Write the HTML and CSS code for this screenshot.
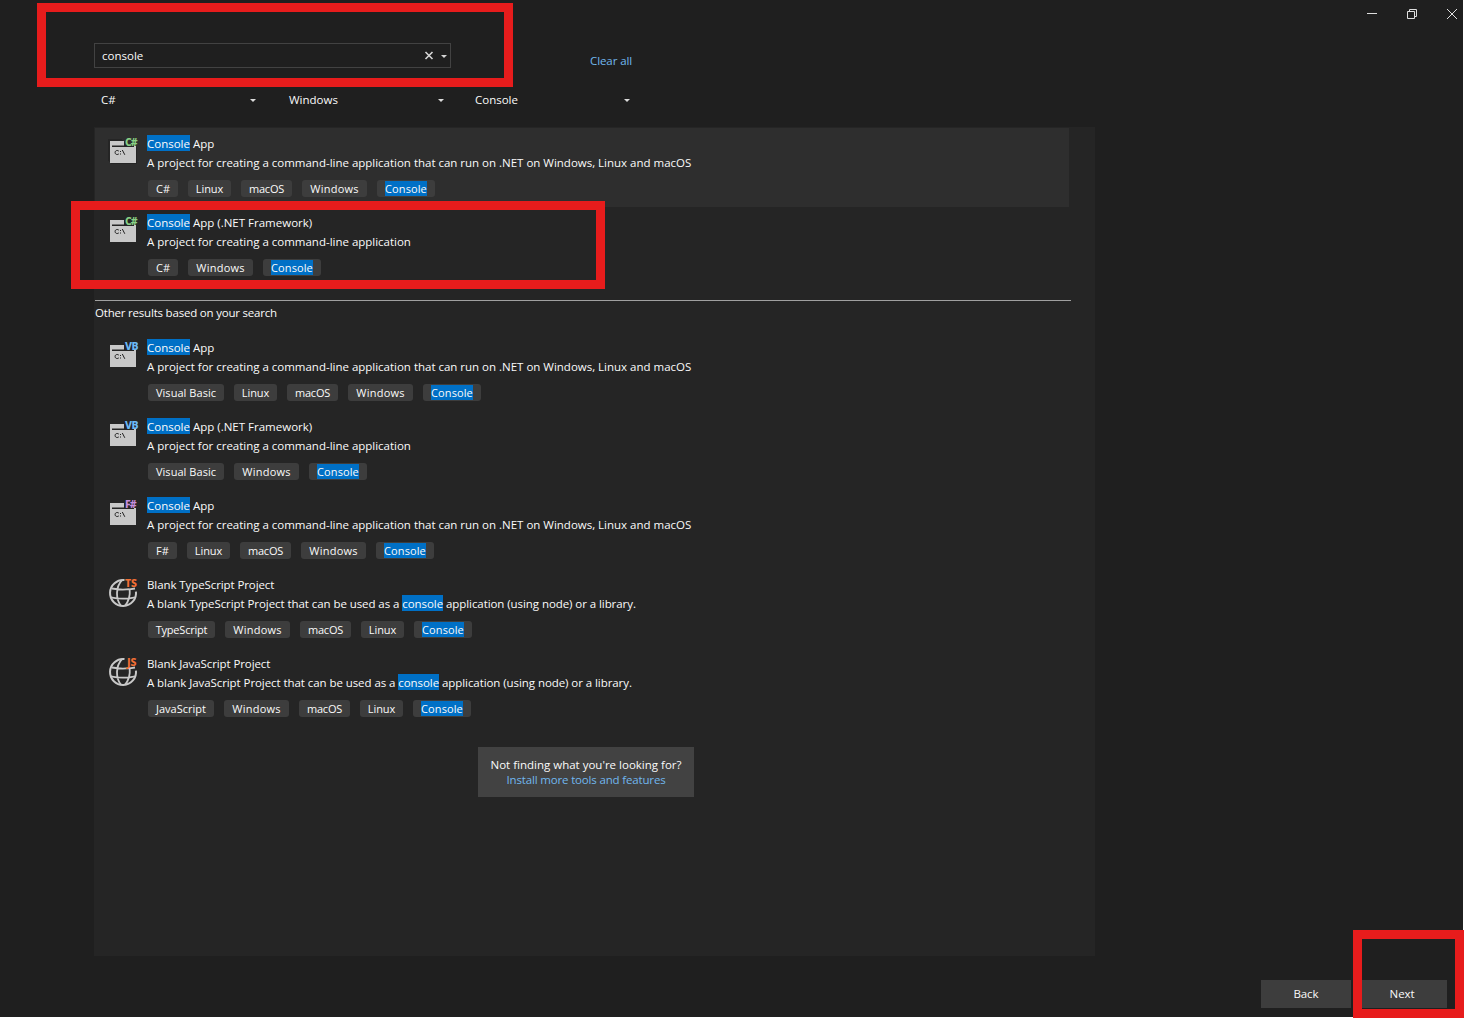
FILE: index.html
```
<!DOCTYPE html>
<html lang="en">
<head>
<meta charset="utf-8">
<title>Create a new project</title>
<link rel="stylesheet" href="styles.css">
</head>
<body>
<svg class="defs" width="0" height="0">
  <symbol id="term" viewBox="0 0 34 32">
    <path d="M3 5h14v4.400H3zM3 11h26v16H3z" fill="#c8c8c8"/>
    <path d="M3 9h2v2H3zM27 10h2v2h-2z" fill="#c8c8c8"/>
    <path d="M11.800 15.100c-.6-.5-1.100-.6-1.700-.6-1.200 0-2 .8-2 2s.8 2 2 2c.6 0 1.100-.1 1.700-.600M13.500 15v1M13.500 17.500v1M15.300 14l2.500 4.800" fill="none" stroke="#222" stroke-width="1"/>
  </symbol>
  <symbol id="globe" viewBox="0 0 34 32">
    <g fill="none" stroke="#c8c8c8" stroke-width="2">
      <path d="M17.500 3.080a13 13 0 1 0 11.450 11.450"/>
      <path d="M15 3.200c-6.500 7-6.500 18.500-1 25.600M18 28.800c3.500-4.300 5.300-9.500 4.700-16.300M5 11.500q9 1.800 17.500.7M3.700 20.300q12.300 2.800 24.600 0M22.500 12.300l5.500-.8" stroke-width="1.800"/>
    </g>
  </symbol>
</svg>
<div class="window">
  <div class="titlebar">
    <svg width="92" height="12" viewBox="0 0 92 12" fill="none" stroke="#dedede">
      <path d="M1 5.500h10"/>
      <path d="M41.500 3.500h7v7h-7zM43.500 3V1.500h7v7H49"/>
      <path d="M81 1l10 10M91 1L81 11"/>
    </svg>
  </div>
  <div class="top">
    <div class="search">
      <span class="query">console</span>
      <svg width="24" height="10" viewBox="0 0 24 10"><path d="M1.500 1l7 7M8.500 1l-7 7" stroke="#d6d6d6" stroke-width="1.600" fill="none"/><path d="M17 4h6l-3 3z" fill="#d6d6d6"/></svg>
    </div>
    <a class="clear">Clear all</a>
  </div>
  <div class="filters">
    <div class="filter"><span>C#</span><i class="caret"></i></div>
    <div class="filter"><span>Windows</span><i class="caret"></i></div>
    <div class="filter"><span>Console</span><i class="caret"></i></div>
  </div>
  <div class="results">
    <div class="item selected">
      <div class="icon"><svg><use href="#term"/></svg><b class="lang cs">C#</b></div>
      <div class="info">
        <div class="name"><mark>Console</mark> App</div>
        <div class="desc">A project for creating a command-line application that can run on .NET on Windows, Linux and macOS</div>
        <div class="tags"><span class="tag w30">C#</span><span class="tag linux">Linux</span><span class="tag macos">macOS</span><span class="tag windows">Windows</span><span class="tag console"><mark>Console</mark></span></div>
      </div>
    </div>
    <div class="item">
      <div class="icon"><svg><use href="#term"/></svg><b class="lang cs">C#</b></div>
      <div class="info">
        <div class="name"><mark>Console</mark> App (.NET Framework)</div>
        <div class="desc">A project for creating a command-line application</div>
        <div class="tags"><span class="tag w30">C#</span><span class="tag windows">Windows</span><span class="tag console"><mark>Console</mark></span></div>
      </div>
    </div>
    <div class="other">Other results based on your search</div>
    <div class="item">
      <div class="icon"><svg><use href="#term"/></svg><b class="lang vb">VB</b></div>
      <div class="info">
        <div class="name"><mark>Console</mark> App</div>
        <div class="desc">A project for creating a command-line application that can run on .NET on Windows, Linux and macOS</div>
        <div class="tags"><span class="tag basic">Visual Basic</span><span class="tag linux">Linux</span><span class="tag macos">macOS</span><span class="tag windows">Windows</span><span class="tag console"><mark>Console</mark></span></div>
      </div>
    </div>
    <div class="item">
      <div class="icon"><svg><use href="#term"/></svg><b class="lang vb">VB</b></div>
      <div class="info">
        <div class="name"><mark>Console</mark> App (.NET Framework)</div>
        <div class="desc">A project for creating a command-line application</div>
        <div class="tags"><span class="tag basic">Visual Basic</span><span class="tag windows">Windows</span><span class="tag console"><mark>Console</mark></span></div>
      </div>
    </div>
    <div class="item">
      <div class="icon"><svg><use href="#term"/></svg><b class="lang fs">F#</b></div>
      <div class="info">
        <div class="name"><mark>Console</mark> App</div>
        <div class="desc">A project for creating a command-line application that can run on .NET on Windows, Linux and macOS</div>
        <div class="tags"><span class="tag w29">F#</span><span class="tag linux">Linux</span><span class="tag macos">macOS</span><span class="tag windows">Windows</span><span class="tag console"><mark>Console</mark></span></div>
      </div>
    </div>
    <div class="item">
      <div class="icon"><svg><use href="#globe"/></svg><b class="lang ts">TS</b></div>
      <div class="info">
        <div class="name tight">Blank TypeScript Project</div>
        <div class="desc script">A blank TypeScript Project that can be used as a <mark>console</mark> application (using node) or a library.</div>
        <div class="tags"><span class="tag typescript">TypeScript</span><span class="tag windows">Windows</span><span class="tag macos">macOS</span><span class="tag linux">Linux</span><span class="tag console"><mark>Console</mark></span></div>
      </div>
    </div>
    <div class="item">
      <div class="icon"><svg><use href="#globe"/></svg><b class="lang ts js">JS</b></div>
      <div class="info">
        <div class="name tight">Blank JavaScript Project</div>
        <div class="desc script">A blank JavaScript Project that can be used as a <mark>console</mark> application (using node) or a library.</div>
        <div class="tags"><span class="tag javascript">JavaScript</span><span class="tag windows">Windows</span><span class="tag macos">macOS</span><span class="tag linux">Linux</span><span class="tag console"><mark>Console</mark></span></div>
      </div>
    </div>
    <div class="more"><span>Not finding what you're looking for?</span><a>Install more tools and features</a></div>
  </div>
  <div class="buttons"><div class="btn">Back</div><div class="btn">Next</div></div>
</div>
<div class="callout callout-search"></div>
<div class="callout callout-item"></div>
<div class="callout callout-next"></div>
</body>
</html>
```
FILE: styles.css
```
* { box-sizing: border-box; }
body { margin: 0; background: #fff; overflow: hidden; font: 11.5px/16px "Open Sans", "Noto Sans", sans-serif; color: #fafafa; }
.defs { display: block; }
.window { width: 1463px; height: 1017px; background: #1f1f1f; display: flex; flex-direction: column; }
.titlebar { height: 43px; padding: 8px 5px 0 0; display: flex; justify-content: flex-end; align-items: flex-start; }
.top { height: 25px; padding-left: 94px; display: flex; gap: 139px; white-space: nowrap; }
.search { width: 357px; height: 25px; border: 1px solid #424242; display: flex; justify-content: space-between; align-items: center; padding: 0 2px 0 7px; }
.clear { color: #71b7ee; padding-top: 10px; letter-spacing: -.08px; }
.filters { display: grid; grid-template-columns: 188px 186px 156px; padding: 24px 0 0 101px; height: 59px; }
.filter { height: 16px; display: flex; width: 155px; justify-content: space-between; align-items: center; }
.caret { border: 3px solid transparent; border-top-color: #dcdcdc; border-bottom: 0; margin-top: 1px; }
.results { margin-left: 94px; width: 1001px; height: 829px; padding: 1px 0 0 1px; background: #252525; white-space: nowrap; }
.item { width: 974px; height: 79px; display: flex; }
.selected { background: #2e2e2e; }
.icon { width: 52px; height: 79px; padding: 8px 0 0 12px; position: relative; }
.icon svg { width: 34px; height: 32px; display: block; }
.selected svg { filter: drop-shadow(1.5px 1.5px 0 #252525) drop-shadow(-1.5px -1.5px 0 #252525); }
.lang { position: absolute; left: 30px; top: 9px; font: 800 10.5px/10px "Noto Sans", "Open Sans", sans-serif; letter-spacing: -.9px; }
.cs { color: #89d185; }
.vb { color: #6bb8f5; letter-spacing: -.6px; }
.fs { color: #c58edc; }
.ts { color: #f26f35; letter-spacing: -.2px; }
.js { left: 32px; }
.info { padding-top: 8px; }
.name { height: 19px; }
.tight { letter-spacing: -.09px; }
.desc { height: 25px; letter-spacing: -.01px; }
.desc.script { letter-spacing: -.068px; }
mark { background: #0070c6; color: inherit; display: inline-block; height: 16px; line-height: 18px; margin-top: -1px; vertical-align: top; }
.tags { display: flex; gap: 10px; padding-left: 1px; }
.tag { height: 17px; border-radius: 3px; background: #3d3d3d; text-align: center; font-size: 11px; line-height: 17px; width: 58px; }
.tag mark { height: 15px; line-height: 15px; margin-top: 1px; letter-spacing: .1px; }
.w30 { width: 30px; }
.w29 { width: 29px; }
.linux { width: 43px; letter-spacing: -.1px; }
.macos { width: 51px; letter-spacing: -.2px; }
.windows { width: 65px; letter-spacing: .25px; }
.basic { width: 76px; letter-spacing: .05px; }
.typescript { width: 67px; letter-spacing: -.2px; }
.javascript { width: 66px; }
.other { height: 46px; margin-top: 14px; width: 976px; border-top: 1px solid #a0a0a0; padding-top: 4px; margin-bottom: -14px; letter-spacing: -.2px; }
.more { width: 216px; height: 50px; margin: 20px 0 0 383px; background: #424242; display: flex; flex-direction: column; align-items: center; padding-top: 10px; line-height: 15px; }
.more a { color: #71b7ee; letter-spacing: -.16px; }
.buttons { display: flex; justify-content: flex-end; gap: 6px; padding: 24px 16px 0 0; }
.btn { width: 90px; height: 28px; background: #3d3d3d; text-align: center; line-height: 28px; letter-spacing: -.1px; }
.callout { position: absolute; border: 9px solid #e71c1c; }
.callout-search { left: 37px; top: 3px; width: 476px; height: 84px; }
.callout-item { left: 71px; top: 201px; width: 534px; height: 88px; }
.callout-next { left: 1353px; top: 930px; width: 111px; height: 88px; }
```
